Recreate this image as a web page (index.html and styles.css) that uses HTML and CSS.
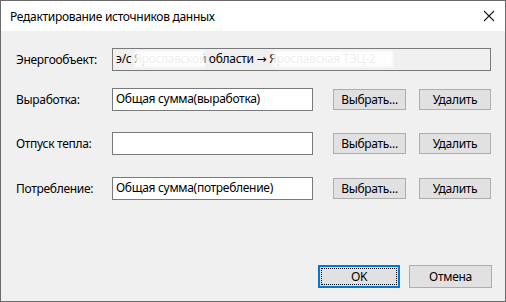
FILE: index.html
```html
<!DOCTYPE html>
<html lang="ru">
<head>
    <meta charset="UTF-8">
    <title>Редактирование источников данных</title>
    <link rel="stylesheet" href="styles.css">
</head>
<body>
<div class="dialog">
    <div class="titlebar">
        <span class="title">Редактирование источников данных</span>
        <svg class="close" width="12" height="12" viewBox="0 0 12 12"><path d="M1 1 L11 11 M11 1 L1 11" stroke="#1a1a1a" stroke-width="1.1" fill="none"/></svg>
    </div>
    <div class="content">
        <div class="row first">
            <label class="lbl">Энергообъект:</label>
            <div class="field readonly">
                <span>э/с Ярославской области <span class="arrow">→</span> Ярославская ТЭЦ-2</span>
                <span class="blur b1"></span>
                <span class="blur b2"></span>
            </div>
        </div>
        <div class="row r2">
            <label class="lbl">Выработка:</label>
            <div class="field">Общая сумма(выработка)</div>
            <button class="btn pick">Выбрать...</button>
            <button class="btn del">Удалить</button>
        </div>
        <div class="row r3">
            <label class="lbl">Отпуск тепла:</label>
            <div class="field"></div>
            <button class="btn pick">Выбрать...</button>
            <button class="btn del">Удалить</button>
        </div>
        <div class="row r4">
            <label class="lbl">Потребление:</label>
            <div class="field">Общая сумма(потребление)</div>
            <button class="btn pick">Выбрать...</button>
            <button class="btn del">Удалить</button>
        </div>
        <div class="footer">
            <button class="btn ok">OK</button>
            <button class="btn cancel">Отмена</button>
        </div>
    </div>
</div>
</body>
</html>
```

FILE: styles.css
```css
html, body { margin: 0; padding: 0; background: #3a3a3a; }
body { font-family: "Noto Sans", "Liberation Sans", sans-serif; font-size: 12px; color: #000; }
.dialog { width: 506px; height: 302px; box-sizing: border-box; border: 1px solid #6a6a6a; display: flex; flex-direction: column; background: #f0f0f0; }
.titlebar { height: 30px; background: #fff; display: flex; align-items: center; justify-content: space-between; padding: 0 10px 0 9px; flex-shrink: 0; }
.title { font-size: 12px; letter-spacing: -0.3px; }
.close { display: block; }
.content { flex: 1; display: flex; flex-direction: column; padding: 17px 13px 13px 15px; }
.row { display: flex; align-items: flex-start; }
.r2 { margin-top: 17px; }
.r3 { margin-top: 21px; }
.r4 { margin-top: 22px; }
.lbl { width: 96px; height: 23px; line-height: 24px; letter-spacing: -0.3px; }
.field { position: relative; box-sizing: border-box; width: 201px; height: 23px; line-height: 20px; border: 1px solid #7a7a7a; background: #fff; padding: 0 3px; white-space: nowrap; overflow: hidden; letter-spacing: -0.3px; }
.readonly { width: 379px; background: #f0f0f0; }
.arrow { font-family: "DejaVu Sans", sans-serif; font-size: 12px; }
.blur { position: absolute; top: 2px; height: 16px; background: rgba(255,255,255,0.93); filter: blur(1.5px); }
.b1 { left: 22px; width: 70px; }
.b2 { left: 160px; width: 120px; }
.btn { font-family: inherit; font-size: 12px; color: #000; box-sizing: border-box; background: #e1e1e1; border: 1px solid #adadad; padding: 0; height: 21px; margin-top: 1px; letter-spacing: -0.3px; }
.pick { width: 73px; margin-left: 20px; }
.del { width: 72px; margin-left: 13px; }
.footer { margin-top: auto; display: flex; justify-content: flex-end; gap: 9px; }
.ok, .cancel { height: 23px; margin-top: 0; }
.ok { position: relative; width: 82px; border: 2px solid #0078d7; }
.ok::after { content: ""; position: absolute; inset: 1px; border: 1px dotted #000; }
.cancel { width: 83px; }
```
